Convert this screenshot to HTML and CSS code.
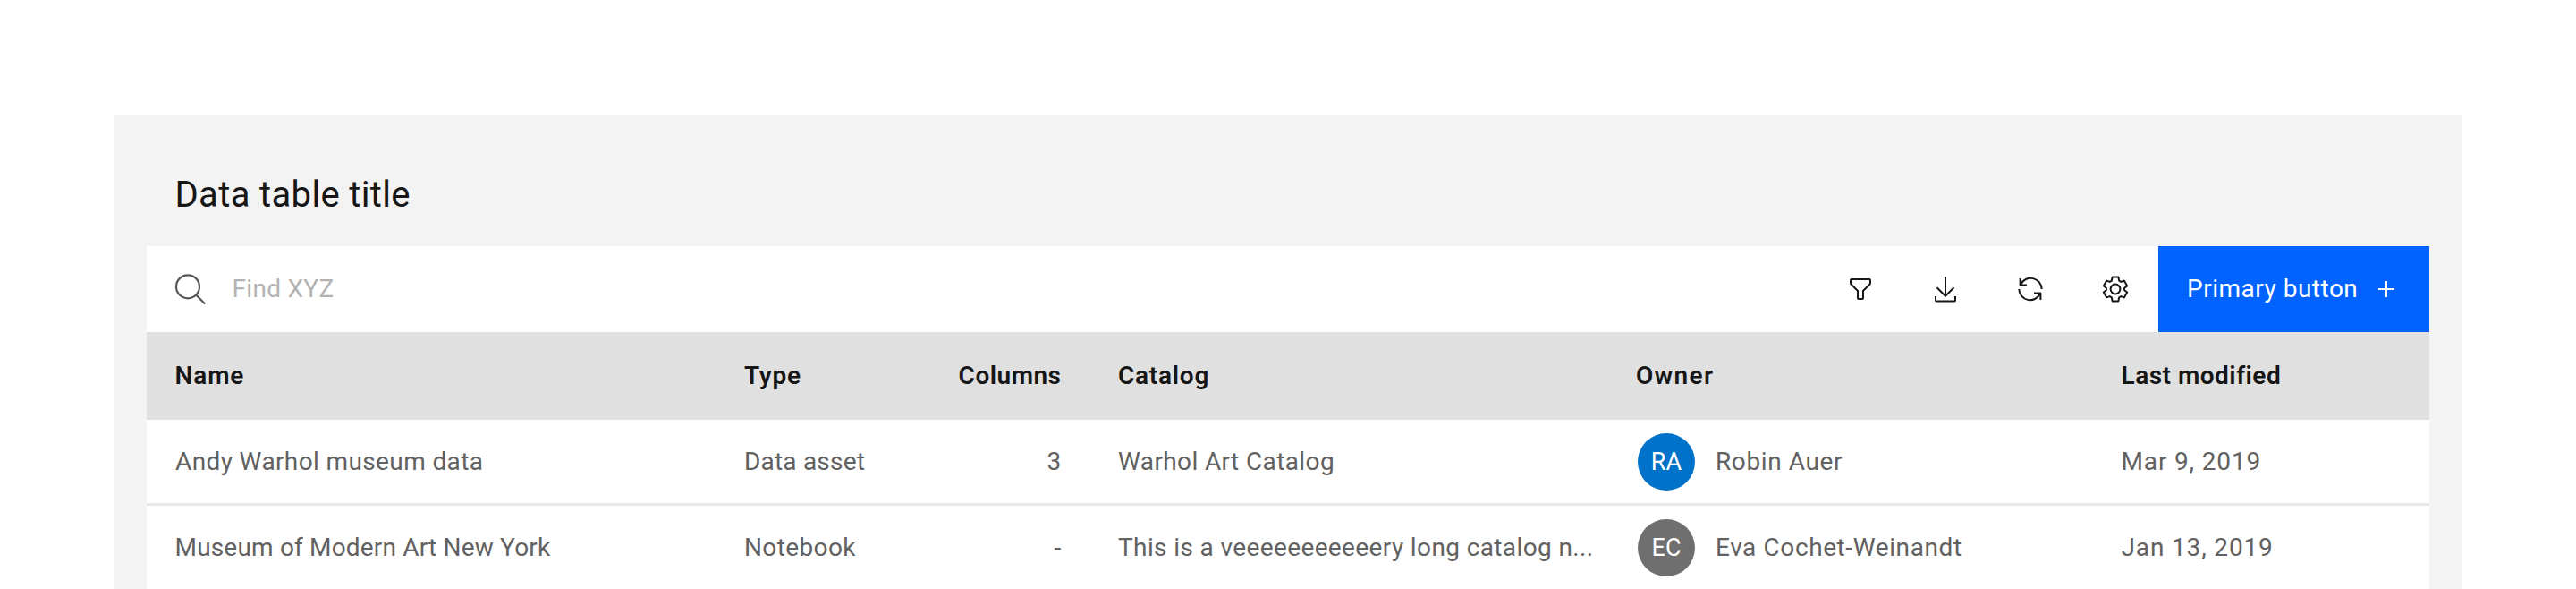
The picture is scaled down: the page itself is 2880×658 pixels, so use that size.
FILE: index.html
```html
<!DOCTYPE html>
<html lang="en">
<head>
<meta charset="utf-8">
<title>Data table</title>
<link rel="stylesheet" href="styles.css">
</head>
<body>
<main class="panel">
  <h1 class="title">Data table title</h1>
  <section class="table">
    <div class="toolbar">
      <div class="search">
        <svg class="search-icon" viewBox="0 0 36 36"><circle cx="15" cy="15.3" r="13"/><path d="M24.2 24.5l10 10"/></svg>
        <span class="placeholder">Find XYZ</span>
      </div>
      <div class="actions">
        <svg class="icon" viewBox="0 0 32 32"><path d="M6 5h20a1 1 0 0 1 1 1v3.6a1 1 0 0 1-.3.7L19 18v8a1 1 0 0 1-1 1h-4a1 1 0 0 1-1-1v-8L5.300 10.300a1 1 0 0 1-.3-.7V6a1 1 0 0 1 1-1z"/></svg>
        <svg class="icon" viewBox="0 0 32 32"><path d="M16 2.200V23.600M6.500 14.200l9.500 9.500 9.500-9.500M5 24v4.500a1 1 0 0 0 1 1h20a1 1 0 0 0 1-1V24"/></svg>
        <svg class="icon" viewBox="0 0 32 32"><path d="M28.700 16A12.400 12.400 0 0 0 5.200 10.700M4.600 4v7.600h7.400M3.300 16A12.400 12.400 0 0 0 26.800 21.300M27.400 28v-7.600H20"/></svg>
        <svg class="icon" viewBox="0 0 32 32"><circle cx="16" cy="16" r="5.400"/><path d="M12.600 2.600h6.800l.8 4.100 2.100 1.200 3.500-1.300 3.400 5.900-3.100 2.300v2.400l3.100 2.300-3.400 5.900-3.500-1.300-2.100 1.200-.8 4.100h-6.800l-.8-4.100-2.100-1.200-3.500 1.300-3.400-5.900 3.100-2.300v-2.400l-3.100-2.300 3.400-5.900 3.500 1.300 2.100-1.200z"/></svg>
      </div>
      <button class="primary"><span>Primary button</span><svg class="plus" viewBox="0 0 20 20"><path d="M10 1v18M1 10h18"/></svg></button>
    </div>
    <div class="row head">
      <div class="cell name">Name</div>
      <div class="cell type">Type</div>
      <div class="cell number">Columns</div>
      <div class="cell catalog">Catalog</div>
      <div class="cell owner">Owner</div>
      <div class="cell date">Last modified</div>
    </div>
    <div class="row">
      <div class="cell">Andy Warhol museum data</div>
      <div class="cell short">Data asset</div>
      <div class="cell number">3</div>
      <div class="cell">Warhol Art Catalog</div>
      <div class="cell person"><span class="avatar blue">RA</span><span>Robin Auer</span></div>
      <div class="cell date">Mar 9, 2019</div>
    </div>
    <div class="row">
      <div class="cell tight">Museum of Modern Art New York</div>
      <div class="cell">Notebook</div>
      <div class="cell number">-</div>
      <div class="cell">This is a veeeeeeeeeeery long catalog n...</div>
      <div class="cell person"><span class="avatar gray">EC</span><span>Eva Cochet-Weinandt</span></div>
      <div class="cell date">Jan 13, 2019</div>
    </div>
  </section>
</main>
</body>
</html>
```

FILE: styles.css
```css
* { box-sizing: border-box; }
html { overflow: hidden; }
body {
  margin: 0;
  padding: 128px 128px 0;
  height: 658px;
  overflow: hidden;
  background: #fff;
  color: #161616;
  font: 400 28px/36px Roboto, "Noto Sans", sans-serif;
}
.panel { height: 533px; padding: 0 36px; background: #f3f3f3; }
.title {
  margin: 0;
  height: 147px;
  padding: 66px 0 0 31.500px;
  font-size: 40px;
  font-weight: 400;
  line-height: 48px;
  letter-spacing: .35px;
}
.toolbar { display: flex; height: 96px; background: #fff; }
.search { flex: 1; display: flex; align-items: center; gap: 29px; padding-left: 30.500px; }
.search-icon { width: 36px; height: 36px; fill: none; stroke: #565656; stroke-width: 2.200; }
.placeholder { color: #b3b3b3; letter-spacing: .3px; }
.actions { display: flex; align-items: center; gap: 63px; padding-right: 32px; }
.icon { width: 32px; height: 32px; fill: none; stroke: #161616; stroke-width: 2; stroke-linejoin: round; }
.primary {
  display: flex;
  align-items: center;
  gap: 22px;
  width: 303px;
  padding: 0 0 0 32px;
  border: 0;
  background: #0062ff;
  color: #fff;
  font: inherit;
  letter-spacing: .500px;
}
.plus { width: 20px; height: 20px; fill: none; stroke: #fff; stroke-width: 2; }
.row {
  display: grid;
  grid-template-columns: 636px 260px 158px 579px 543px 376px;
  height: 96px;
  background: #fff;
  border-bottom: 3px solid #e8e8e8;
  color: #616161;
}
.cell { display: flex; align-items: center; padding-left: 32px; white-space: nowrap; letter-spacing: .380px; }
.short { letter-spacing: .200px; }
.number { justify-content: flex-end; padding: 0 31.500px 0 0; }
.date { padding-left: 31.500px; letter-spacing: .850px; }
.tight { padding-left: 31.500px; letter-spacing: .180px; }
.head { height: 98px; border: 0; background: #e0e0e0; color: #161616; font-weight: 600; }
.head .name { padding-left: 31.500px; letter-spacing: .900px; }
.head .type { letter-spacing: .700px; }
.head .number { letter-spacing: .500px; }
.head .catalog { letter-spacing: .750px; }
.head .owner { letter-spacing: 1.300px; }
.head .date { letter-spacing: .500px; }
.person { gap: 23px; padding: 1px 0 0 34px; letter-spacing: .600px; }
.avatar {
  display: flex;
  align-items: center;
  justify-content: center;
  width: 64px;
  height: 64px;
  border-radius: 50%;
  color: #fff;
  font-size: 27px;
  letter-spacing: 0;
}
.blue { background: #0072c9; }
.gray { background: #6f6f6f; }
```
